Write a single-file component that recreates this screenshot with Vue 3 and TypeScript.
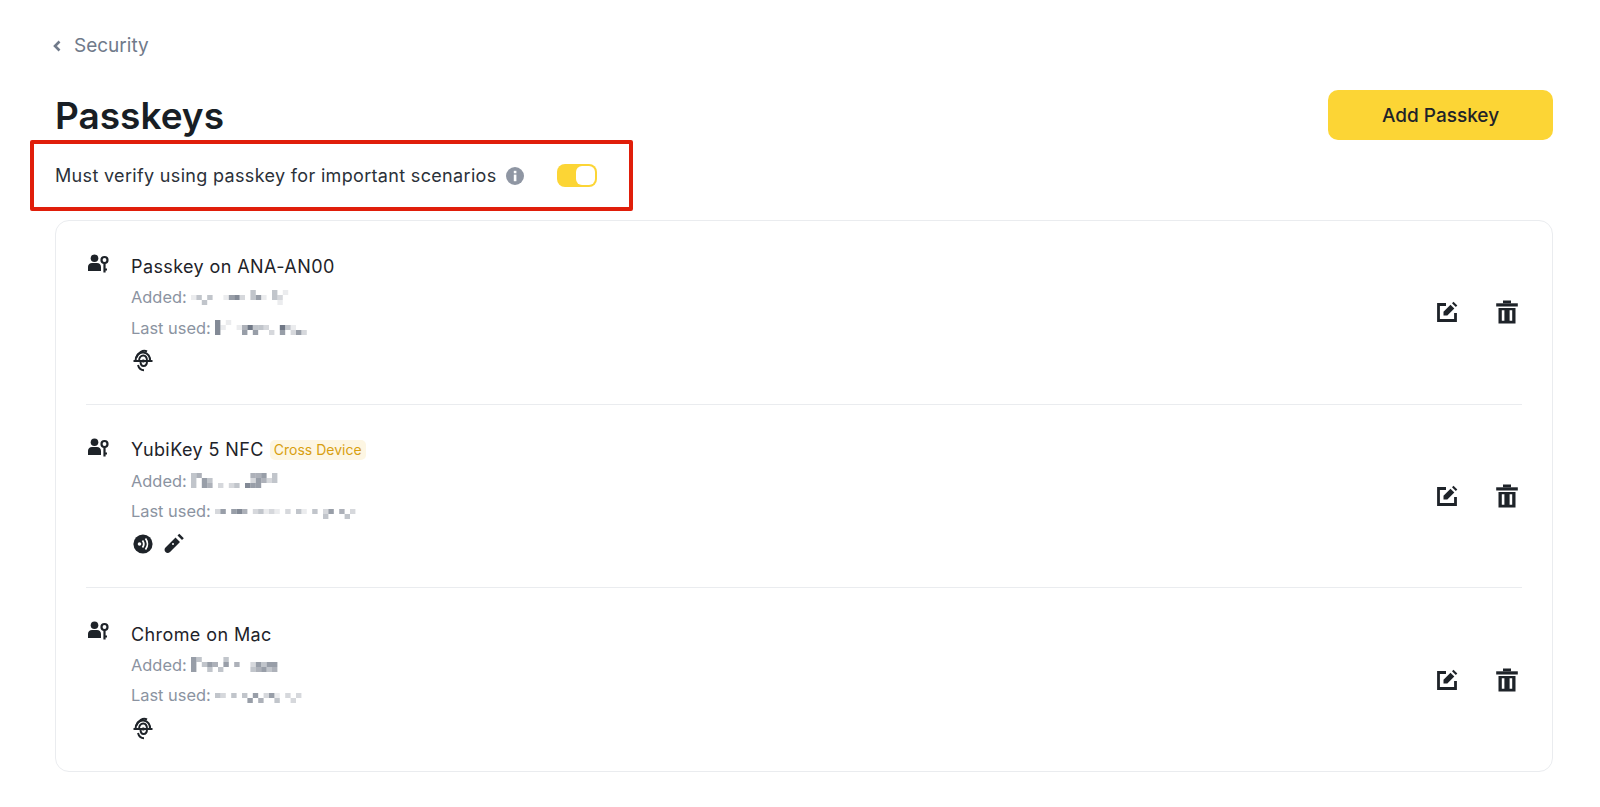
<script setup lang="ts">
interface Passkey {
  name: string
  badge?: string
  added: string[]
  used: string[]
  icons: string[]
}

const passkeys: Passkey[] = [
  {
    name: 'Passkey on ANA-AN00',
    added: ['00000000000300030100', '13030015620351032000', '00300000000000001000'],
    used: ['60100000000000000', '61001473320073100', '60000505002050252'],
    icons: ['fingerprint'],
  },
  {
    name: 'YubiKey 5 NFC',
    badge: 'Cross Device',
    added: ['34000000000445030', '30530000000254230', '30540202306550000'],
    used: ['000000000000000000000000000', '25056402312102031030250402', '00000000000000000000300030'],
    icons: ['nfc', 'usb'],
  },
  {
    name: 'Chrome on Mac',
    added: ['53000030000000000', '50354050400253550', '50030300000345340'],
    used: ['000000000000000000', '32030305025102020', '00000050400300200'],
    icons: ['fingerprint'],
  },
]

function cells(lines: string[]) {
  const out: { x: number; y: number; o: number }[] = []
  lines.forEach((line, y) => {
    line.split('').forEach((ch, x) => {
      const o = Number(ch)
      if (o > 0) out.push({ x: x * 5.4, y: y * 5, o: o / 7 })
    })
  })
  return out
}
</script>

<template>
  <main class="page">
    <a class="back">
      <svg class="chev" viewBox="0 0 10 14" width="10" height="14"><path d="M7.5 2.5 3 7l4.5 4.5" fill="none" stroke="currentColor" stroke-width="2.6" /></svg>
      <span>Security</span>
    </a>

    <header class="head">
      <h1>Passkeys</h1>
      <button class="add">Add Passkey</button>
    </header>

    <div class="verify">
      <span>Must verify using passkey for important scenarios</span>
      <svg class="info" viewBox="0 0 18 18" width="18" height="18">
        <circle cx="9" cy="9" r="9" fill="#8f96a3" />
        <rect x="7.8" y="7.6" width="2.6" height="6.6" fill="#fff" />
        <rect x="7.8" y="3.8" width="2.6" height="2.5" fill="#fff" />
      </svg>
      <span class="toggle"><span class="knob"></span></span>
      <span class="callout"></span>
    </div>

    <section class="card">
      <article v-for="p in passkeys" :key="p.name" class="row">
        <svg class="person" viewBox="0 0 24 24" width="24" height="24">
          <circle cx="8.5" cy="7.200" r="3.800" fill="#1e2329" />
          <path d="M2 20v-4.200C2 13.500 3.800 12 6 12h5c2.200 0 4 1.500 4 3.800V20H2z" fill="#1e2329" />
          <circle cx="18.500" cy="9" r="3" fill="none" stroke="#1e2329" stroke-width="2.200" />
          <path d="M18.500 12v9.500M18.500 18.500h2.500" fill="none" stroke="#1e2329" stroke-width="2.200" />
        </svg>

        <div class="body">
          <div class="name">
            <span>{{ p.name }}</span>
            <span v-if="p.badge" class="badge">{{ p.badge }}</span>
          </div>
          <div class="meta">
            <span>Added:</span>
            <svg class="mosaic" :width="p.added[0].length * 5.4" height="15" aria-hidden="true">
              <rect v-for="(c, i) in cells(p.added)" :key="i" :x="c.x" :y="c.y" width="5.4" height="5" fill="#6f7785" :opacity="c.o" />
            </svg>
          </div>
          <div class="meta">
            <span>Last used:</span>
            <svg class="mosaic" :width="p.used[0].length * 5.4" height="15" aria-hidden="true">
              <rect v-for="(c, i) in cells(p.used)" :key="i" :x="c.x" :y="c.y" width="5.4" height="5" fill="#6f7785" :opacity="c.o" />
            </svg>
          </div>
          <div class="kinds">
            <template v-for="k in p.icons" :key="k">
              <svg v-if="k === 'fingerprint'" viewBox="0 0 24 24" width="24" height="24" fill="none" stroke="#1e2329" stroke-width="2">
                <path d="M5.500 9.500C7 4.500 12 1.500 16 3.500" />
                <path d="M4.500 13c0-5.500 4-9 8-8.500 4.500.5 7 4.500 6.500 8.500" />
                <path d="M8 13c0-3.500 2-5.500 4.300-5.500S16 9.500 16 13c0 3-1.500 5-3.500 5S9.500 16 9.500 13" />
                <path d="M7 17c.8 3 3 5.200 6 5.200" />
                <path d="M12.300 11.500v3" />
                <path d="M2.500 13h19" />
              </svg>
              <svg v-else-if="k === 'nfc'" viewBox="0 0 24 24" width="24" height="24">
                <circle cx="12" cy="12" r="9.600" fill="#1e2329" />
                <circle cx="8.500" cy="12" r="1.800" fill="#fff" />
                <path d="M11.500 8.500c1.500 2 1.500 5 0 7M14.500 6.500c2.500 3.200 2.500 7.800 0 11" fill="none" stroke="#fff" stroke-width="1.800" />
              </svg>
              <svg v-else viewBox="0 0 24 24" width="24" height="24" fill="#1e2329">
                <path d="M14.500 5.500 19 10 9 20c-1.300 1.300-3.300 1.300-4.500 0s-1.300-3.200 0-4.500L14.500 5.500z" />
                <path d="M16.500 3.500 18.300 1.700l4.500 4.500L21 8z" />
                <circle cx="12" cy="12" r="1" fill="#fff" />
              </svg>
            </template>
          </div>
        </div>

        <div class="actions">
          <svg viewBox="0 0 24 24" width="24" height="24" fill="none">
            <path d="M11 4.500H3.500v16h17V13" stroke="#1e2329" stroke-width="2.800" />
            <path d="M8.500 15.500v-3.800l7-7 3.800 3.800-7 7H8.500z" fill="#1e2329" />
            <path d="M17 3.200 18.500 1.700l3.800 3.800-1.500 1.500z" fill="#1e2329" />
          </svg>
          <svg viewBox="0 0 24 24" width="24" height="24" fill="#1e2329">
            <rect x="8" y="0.500" width="8" height="2.800" />
            <rect x="1.200" y="3.300" width="21.600" height="3.200" />
            <path fill-rule="evenodd" d="M3.500 8h17v15.500h-17V8zm3.300 2.300v10.500h2.600V10.300H6.800zm7.800 0v10.500h2.600V10.300h-2.600z" />
          </svg>
        </div>
      </article>
    </section>
  </main>
</template>

<style scoped>
.page {
  width: 1600px;
  height: 807px;
  box-sizing: border-box;
  padding: 31px 47px 0 55px;
  background: #fff;
  color: #1e2329;
  font-family: Inter, "Noto Sans", "Liberation Sans", sans-serif;
  overflow: hidden;
}
.back {
  display: flex;
  align-items: center;
  gap: 12px;
  height: 30px;
  font-size: 19px;
  color: #707a8a;
  line-height: 30px;
}
.chev {
  color: #707a8a;
  margin-left: -3px;
}
.head {
  display: flex;
  justify-content: space-between;
  align-items: center;
  margin-top: 29px;
  height: 50px;
}
h1 {
  margin: 0;
  padding-top: 2px;
  font-size: 37px;
  font-weight: 600;
  line-height: 50px;
  color: #181e25;
}
.add {
  width: 225px;
  height: 50px;
  border: 0;
  border-radius: 10px;
  background: #fcd535;
  color: #1e2329;
  font: 500 19px Inter, "Noto Sans", sans-serif;
}
.verify {
  position: relative;
  display: flex;
  align-items: center;
  width: fit-content;
  height: 71px;
  font-size: 18px;
  letter-spacing: 0.330px;
  color: #2b3139;
}
.info {
  margin-left: 9px;
}
.toggle {
  display: flex;
  align-items: center;
  justify-content: flex-end;
  box-sizing: border-box;
  width: 40px;
  height: 23px;
  margin-left: 33px;
  padding: 0 2px;
  border-radius: 8px;
  background: #fcd535;
}
.knob {
  width: 19px;
  height: 19px;
  border-radius: 6px;
  background: #fff;
}
.callout {
  position: absolute;
  inset: 0 -36px 0 -25px;
  border: 4px solid #e01e0a;
  border-radius: 2px;
  pointer-events: none;
}
.card {
  box-sizing: border-box;
  height: 552px;
  margin-top: 9px;
  padding: 0 30px;
  border: 1px solid #eaecef;
  border-radius: 14px;
}
.row {
  display: flex;
  align-items: center;
  box-sizing: border-box;
  height: 183.670px;
}
.row:not(:last-child) {
  border-bottom: 1px solid #eaecef;
}
.person {
  align-self: flex-start;
  margin-top: 30px;
  margin-left: 0;
}
.body {
  flex: 1;
  margin-left: 21px;
  padding-top: 2px;
}
.name {
  display: flex;
  align-items: center;
  gap: 6px;
  height: 31px;
  font-size: 18px;
  letter-spacing: 0.400px;
  font-weight: 400;
}
.badge {
  display: flex;
  align-items: center;
  height: 20px;
  padding: 0 4px;
  border-radius: 5px;
  background: #fdf6e3;
  color: #d89f10;
  font-size: 14px;
  letter-spacing: 0;
}
.meta {
  display: flex;
  align-items: center;
  gap: 4px;
  height: 30.600px;
  font-size: 16.400px;
  color: #8b93a1;
}
.mosaic {
  filter: blur(0.600px);
}
.kinds {
  display: flex;
  gap: 6px;
  height: 31px;
  align-items: center;
  padding-top: 2px;
}
.actions {
  display: flex;
  gap: 36px;
  margin-right: 3px;
}
</style>

<style>
html, body {
  margin: 0;
  background: #fff;
}
</style>
